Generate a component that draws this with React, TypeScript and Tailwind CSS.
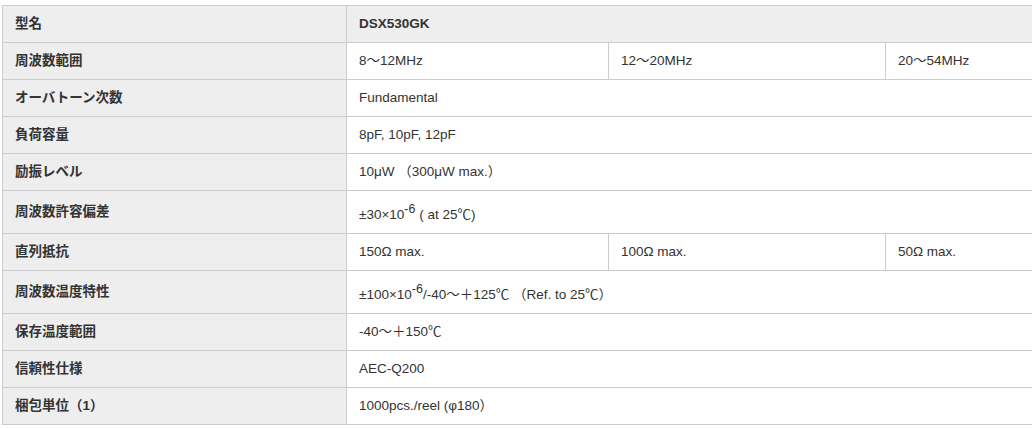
import React from 'react';

type Row = {
  label: string;
  values: React.ReactNode[];
  header?: boolean;
};

const Sup = ({ children }: { children: React.ReactNode }) => (
  <sup className="static top-0 align-[6px] text-[12.5px] leading-[20px]">{children}</sup>
);

const ROWS: Row[] = [
  { label: '型名', values: ['DSX530GK'], header: true },
  { label: '周波数範囲', values: ['8～12MHz', '12～20MHz', '20～54MHz'] },
  { label: 'オーバトーン次数', values: ['Fundamental'] },
  { label: '負荷容量', values: ['8pF, 10pF, 12pF'] },
  { label: '励振レベル', values: ['10μW （300μW max.）'] },
  {
    label: '周波数許容偏差',
    values: [
      <>
        ±30×10<Sup>-6</Sup> ( at 25℃)
      </>,
    ],
  },
  { label: '直列抵抗', values: ['150Ω max.', '100Ω max.', '50Ω max.'] },
  {
    label: '周波数温度特性',
    values: [
      <>
        ±100×10<Sup>-6</Sup>/-40～＋125℃ （Ref. to 25℃）
      </>,
    ],
  },
  { label: '保存温度範囲', values: ['-40～＋150℃'] },
  { label: '信頼性仕様', values: ['AEC-Q200'] },
  { label: '梱包単位（1）', values: ['1000pcs./reel (φ180）'] },
];

export default function App() {
  return (
    <div
      className="w-[1032px] h-[428px] overflow-hidden bg-white pt-[5px] pl-[2px] text-[#333] text-[13.5px] leading-[20px]"
      style={{ fontFamily: '"Liberation Sans", Arial, "Noto Sans CJK JP", sans-serif' }}
    >
      <table className="table-fixed border-collapse w-[1100px]">
        <colgroup>
          <col className="w-[344px]" />
          <col className="w-[262px]" />
          <col className="w-[277px]" />
          <col />
        </colgroup>
        <tbody>
          {ROWS.map((row) => (
            <tr key={row.label} className={row.header ? 'bg-[#eeeeee]' : 'bg-white'}>
              <th className="border border-[#cccccc] bg-[#eeeeee] px-3 py-2 text-left font-bold">
                {row.label}
              </th>
              {row.values.length === 1 ? (
                <td
                  colSpan={3}
                  className={`border border-[#cccccc] px-3 py-2 ${row.header ? 'font-bold' : 'font-normal'}`}
                >
                  {row.values[0]}
                </td>
              ) : (
                row.values.map((v, i) => (
                  <td key={i} className="border border-[#cccccc] px-3 py-2">
                    {v}
                  </td>
                ))
              )}
            </tr>
          ))}
        </tbody>
      </table>
    </div>
  );
}
